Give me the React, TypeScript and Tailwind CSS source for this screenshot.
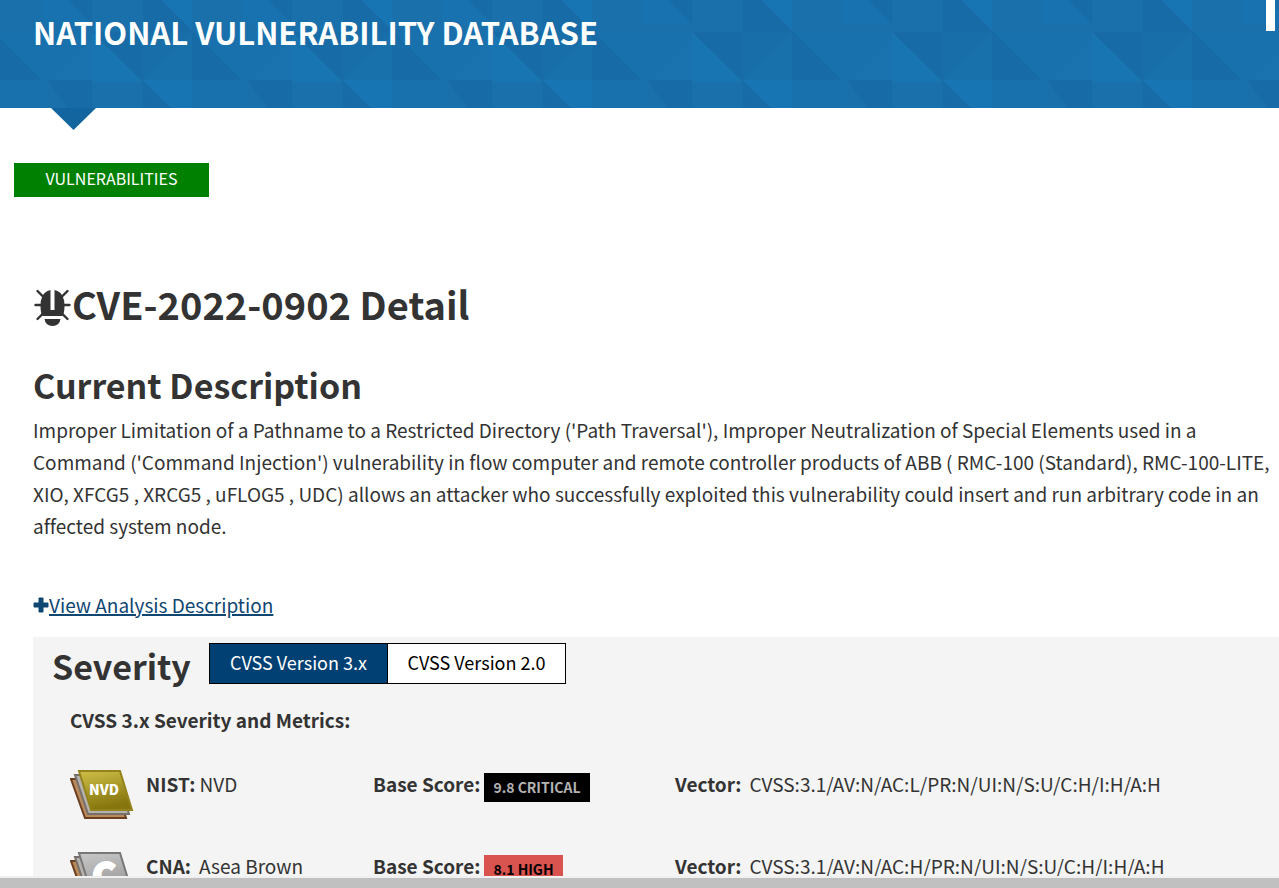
const HeaderPattern = () => (
  <svg className="absolute inset-0 w-full h-full" aria-hidden="true">
    <defs>
      <pattern id="triangles" x="92" y="0" width="200" height="108" patternUnits="userSpaceOnUse">
        <rect width="200" height="108" fill="#1970ab" />
        <path d="M0 32 L50 82 H0 Z" fill="#1875b2" />
        <path d="M0 32 H51 V82 Z" fill="#176ca7" />
        <path d="M51 32 H100 V80 H51 Z" fill="#186ea9" />
        <path d="M100 32 V80 H51 Z" fill="#1971ab" />
        <path d="M100 30 L150 80 H100 Z" fill="#176ba6" />
        <path d="M100 30 H150 V80 Z" fill="#1871ad" />
        <path d="M150 32 H200 V80 H150 Z" fill="#1870ac" />
        <path d="M200 40 V80 H160 Z" fill="#1a73ae" />
        <path d="M51 80 L79 108 H51 Z" fill="#176ca8" />
        <path d="M51 80 H100 V108 H79 Z" fill="#1875b4" />
        <path d="M100 80 H155 V108 H100 Z" fill="#1871ad" />
        <path d="M155 80 H200 V108 H175 Z" fill="#176ca8" />
        <path d="M51 0 H70 L100 30 V32 H51 Z" fill="#176ca8" />
        <path d="M70 0 H100 V30 Z" fill="#1875b3" />
        <path d="M150 0 H176 L200 24 H150 Z" fill="#1872af" />
        <path d="M176 0 H200 V24 Z" fill="#176ca8" />
      </pattern>
    </defs>
    <rect width="100%" height="100%" fill="url(#triangles)" />
  </svg>
);

const Bug = () => (
  <svg viewBox="0 0 38 38" className="w-[39px] h-[38px] shrink-0" fill="#333" aria-hidden="true">
    <path d="M9 27 Q7 24 7 17 Q7 5 14 2 L17 1 V21 H21 V1 L24 2 Q31 5 31 17 Q31 24 29 27 Z" />
    <path d="M11 30 H27 Q26 37 19 37 Q12 37 11 30 Z" />
    <path
      d="M2 16 H8 M30 16 H36 M4 2 L10 8 M34 2 L28 8 M4 30 L10 24 M34 30 L28 24"
      stroke="#333"
      strokeWidth="2.4"
      strokeLinecap="round"
    />
  </svg>
);

const Plus = () => (
  <svg viewBox="0 0 16 16" className="w-4 h-4 shrink-0" aria-hidden="true">
    <path d="M6 1 H10 V6 H15 V10 H10 V15 H6 V10 H1 V6 H6 Z" fill="#0f4672" stroke="#0f4672" strokeLinejoin="round" />
  </svg>
);

interface BookProps {
  label: string;
  top: string;
  bottom: string;
  edge: string;
}

const Book = ({ label, top, bottom, edge }: BookProps) => (
  <svg viewBox="0 0 64 52" className="w-16 h-[52px]" role="img" aria-label={label}>
    <defs>
      <linearGradient id={`cover-${label}`} x1="0" y1="0" x2="0.3" y2="1">
        <stop offset="0" stopColor={top} />
        <stop offset="1" stopColor={bottom} />
      </linearGradient>
    </defs>
    <path d="M1 11 L44 11 L56 50 L15 50 Z" fill="#b98a5c" stroke="#6b3f20" strokeWidth="2" />
    <path d="M5 7 L48 7 L59 46 L18 46 Z" fill="#b5b1ac" stroke="#77706a" strokeWidth="2" />
    <path d="M9 3 H50 L62 42 H21 Z" fill={`url(#cover-${label})`} stroke={edge} strokeWidth="2" />
    <text
      x="34"
      y={label === "NVD" ? 27 : 39}
      fill="#fff"
      stroke="#fff"
      strokeWidth={label === "NVD" ? 0 : 2}
      textAnchor="middle"
      fontFamily="Noto Sans CJK JP"
      fontWeight="900"
      fontSize={label === "NVD" ? 14 : 36}
    >
      {label}
    </text>
  </svg>
);

const scores = [
  {
    source: "NIST:",
    name: "NVD",
    nameClass: "ml-1",
    score: "9.8 CRITICAL",
    scoreClass: "bg-black text-[#b3b3b3]",
    vector: "CVSS:3.1/AV:N/AC:L/PR:N/UI:N/S:U/C:H/I:H/A:H",
    book: { label: "NVD", top: "#cfbf48", bottom: "#85750c", edge: "#94831c" },
  },
  {
    source: "CNA:",
    name: "Asea Brown",
    nameClass: "ml-2",
    score: "8.1 HIGH",
    scoreClass: "bg-[#d9534f] text-black",
    vector: "CVSS:3.1/AV:N/AC:H/PR:N/UI:N/S:U/C:H/I:H/A:H",
    book: { label: "C", top: "#c8c8c8", bottom: "#9a9a9a", edge: "#777" },
  },
];

export default function App() {
  return (
    <div className="h-screen overflow-hidden flex flex-col bg-white text-[#333] font-['Noto_Sans_CJK_JP',sans-serif] [font-variant-ligatures:none] text-[19px] leading-8">
      <header className="relative h-[108px] shrink-0 bg-[#1871ad] pl-[33px] pr-1 flex items-start justify-between">
        <HeaderPattern />
        <h2 className="relative pt-[10px] text-white font-bold text-[31px] leading-[44px]">NATIONAL VULNERABILITY DATABASE</h2>
        <span className="relative w-[9px] h-[31px] bg-white" />
      </header>
      <div className="ml-[51px] w-[45px] h-[22px] shrink-0 bg-[#12659f] [clip-path:polygon(0_0,100%_0,50%_100%)]" />
      <div className="pt-[33px] pl-[14px]">
        <a href="#vulnerabilities" className="flex w-[195px] h-[34px] pb-1 items-center justify-center bg-[#008000] text-white text-base">
          VULNERABILITIES
        </a>
      </div>
      <main className="pl-[33px] flex-1 min-h-0 overflow-hidden pt-[84px]">
        <h1 className="flex items-end font-bold text-[38px] leading-[46px]">
          <Bug />
          CVE-2022-0902 Detail
        </h1>
        <h3 className="mt-8 mb-[3px] font-bold text-[34px] leading-[52px]">Current Description</h3>
        <p className="pr-2">
          Improper Limitation of a Pathname to a Restricted Directory ('Path Traversal'), Improper Neutralization of Special Elements used in a Command ('Command Injection') vulnerability in flow computer and remote controller products of ABB ( RMC-100 (Standard), RMC-100-LITE, XIO, XFCG5 , XRCG5 , uFLOG5 , UDC) allows an attacker who successfully exploited this vulnerability could insert and run arbitrary code in an affected system node.
        </p>
        <a href="#analysis" className="mt-[47px] flex items-center text-[#0f4672]">
          <Plus />
          <span className="underline decoration-2">View Analysis Description</span>
        </a>
        <section className="mt-4 bg-[#f4f4f4] pt-[6px]">
          <div className="flex pl-[19px]">
            <h3 className="w-[157px] font-bold text-[34px] leading-[46px]">Severity</h3>
            <div className="flex h-[41px] border border-black text-black text-lg">
              <button className="w-[177px] pb-[3px] bg-[#004073] text-white">CVSS Version 3.x</button>
              <button className="w-[178px] pb-[3px] border-l border-black bg-white">CVSS Version 2.0</button>
            </div>
          </div>
          <div className="pl-[37px]">
            <h4 className="mt-[15px] font-bold">CVSS 3.x Severity and Metrics:</h4>
            {scores.map((row) => (
              <div key={row.source} className="flex mt-8 h-[50px]">
                <div className="w-[76px]">
                  <Book {...row.book} />
                </div>
                <div className="w-[227px] flex">
                  <b className="font-bold">{row.source}</b>
                  <span className={row.nameClass}>{row.name}</span>
                </div>
                <div className="w-[302px] flex gap-1">
                  <b className="font-bold">Base Score:</b>
                  <span className={`mt-[5px] h-[29px] px-[9px] text-sm leading-7 font-bold ${row.scoreClass}`}>{row.score}</span>
                </div>
                <div className="flex gap-2">
                  <b className="font-bold">Vector:</b>
                  <span>{row.vector}</span>
                </div>
              </div>
            ))}
          </div>
        </section>
      </main>
      <footer className="h-3 shrink-0 border-t-2 border-[#f0f0f0] bg-[#c0c0c0]" />
    </div>
  );
}
